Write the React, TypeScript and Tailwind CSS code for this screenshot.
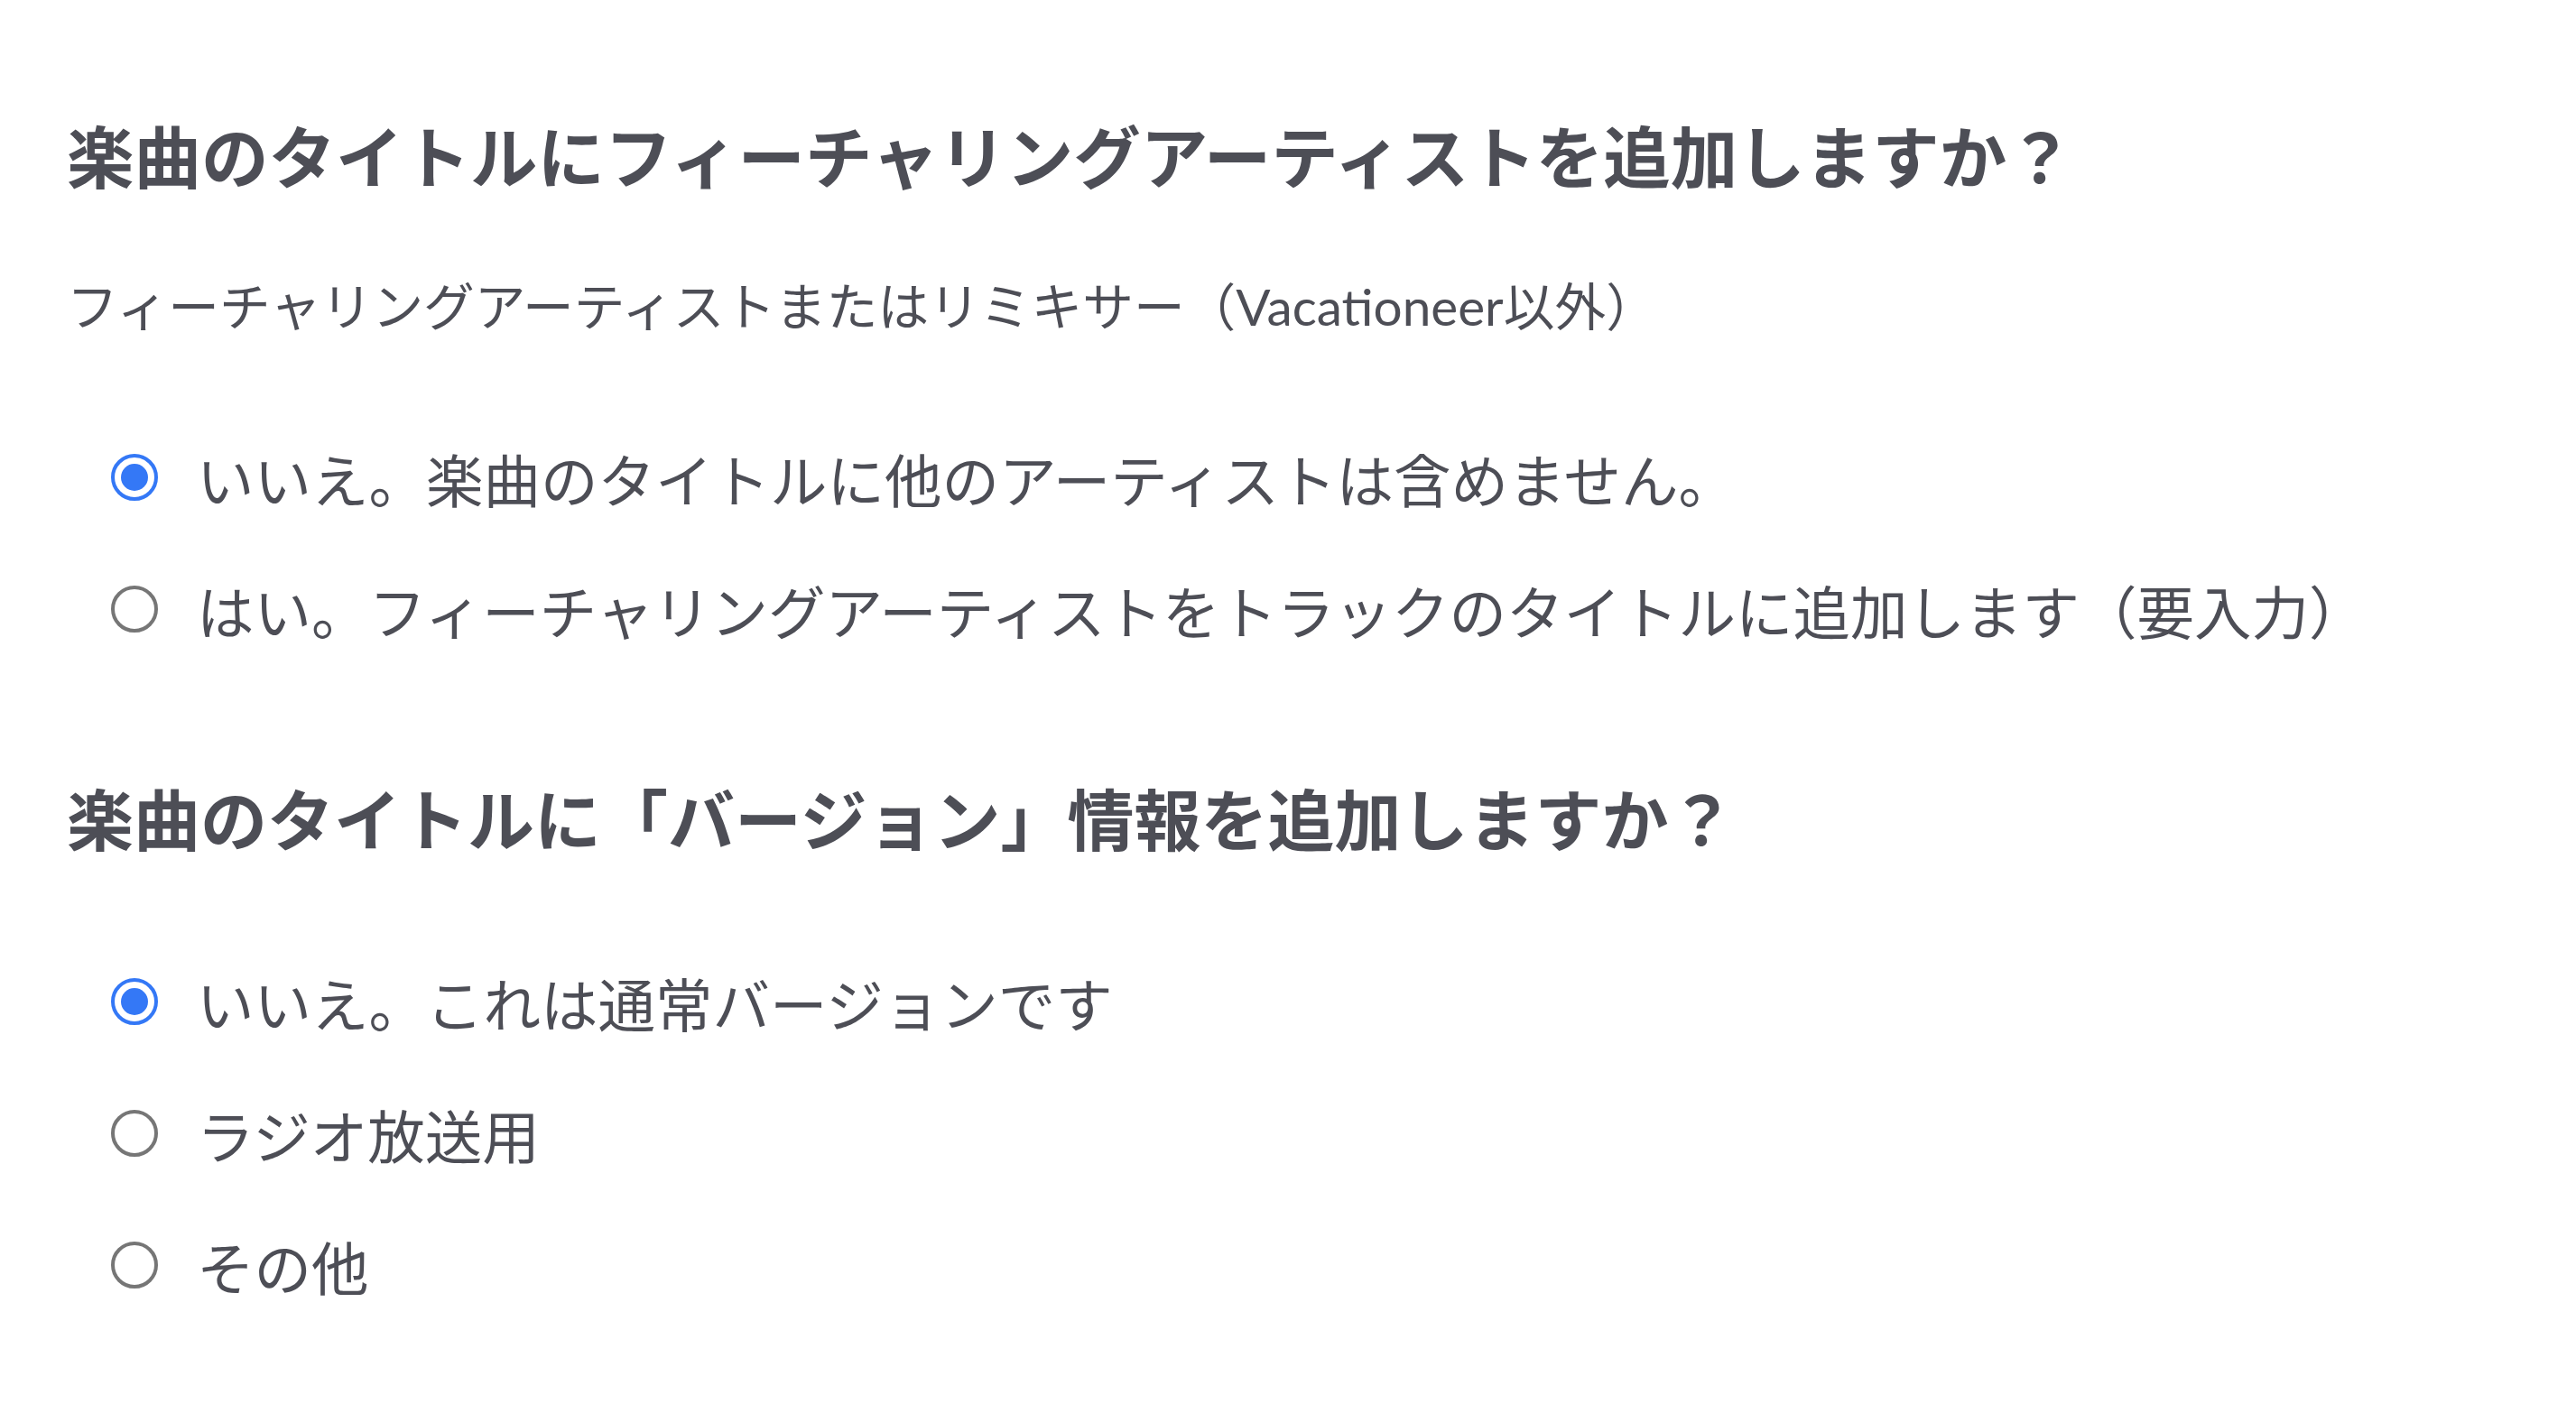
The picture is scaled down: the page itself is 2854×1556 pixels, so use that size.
import React from "react";

const font = { fontFamily: 'Lato, "Noto Sans CJK JP", sans-serif' };

function Radio({ checked }: { checked: boolean }) {
  return checked ? (
    <span className="mb-[8px] flex h-[52px] w-[52px] shrink-0 items-center justify-center rounded-full border-[4px] border-[#3478f6] bg-white">
      <span className="h-[30px] w-[30px] rounded-full bg-[#3478f6]" />
    </span>
  ) : (
    <span className="mb-[8px] h-[52px] w-[52px] shrink-0 rounded-full border-[4px] border-[#767676] bg-white" />
  );
}

function Option({ checked, label }: { checked: boolean; label: string }) {
  return (
    <label className="flex h-[146px] items-center pl-[123px]">
      <Radio checked={checked} />
      <span className="ml-[43px] text-[63.5px] leading-[100px] text-[#4d4e56]">{label}</span>
    </label>
  );
}

export default function App() {
  return (
    <div className="min-h-screen w-full bg-white pl-[74px] pt-[124px]" style={font}>
      <h2 className="text-[74.5px] font-bold leading-[100px] text-[#4d4e56]">
        楽曲のタイトルにフィーチャリングアーティストを追加しますか？
      </h2>
      <p className="mt-[75px] text-[56.7px] leading-[80px] text-[#4d4e56]">
        フィーチャリングアーティストまたはリミキサー（Vacationeer以外）
      </p>
      <div className="-ml-[74px] mt-[81px] flex flex-col">
        <Option checked label="いいえ。楽曲のタイトルに他のアーティストは含めません。" />
        <Option checked={false} label="はい。フィーチャリングアーティストをトラックのタイトルに追加します（要入力）" />
      </div>
      <h2 className="mt-[107px] text-[74px] font-bold leading-[100px] text-[#4d4e56]">
        楽曲のタイトルに「バージョン」情報を追加しますか？
      </h2>
      <div className="-ml-[74px] mt-[82px] flex flex-col">
        <Option checked label="いいえ。これは通常バージョンです" />
        <Option checked={false} label="ラジオ放送用" />
        <Option checked={false} label="その他" />
      </div>
    </div>
  );
}
